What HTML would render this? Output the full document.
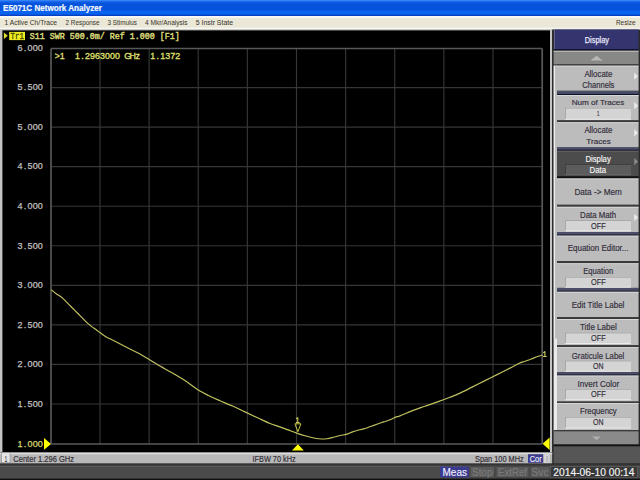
<!DOCTYPE html><html><head><meta charset="utf-8"><style>html,body{margin:0;padding:0;background:#000;overflow:hidden}svg{display:block}</style></head><body><svg width="640" height="480" viewBox="0 0 640 480"><defs><linearGradient id="tb" x1="0" y1="0" x2="0" y2="1"><stop offset="0" stop-color="#4090f8"/><stop offset="0.1" stop-color="#1a66ec"/><stop offset="0.2" stop-color="#0654dc"/><stop offset="0.6" stop-color="#0552dc"/><stop offset="0.72" stop-color="#0864f0"/><stop offset="0.88" stop-color="#0862ee"/><stop offset="0.94" stop-color="#0444c4"/><stop offset="1" stop-color="#0040c0"/></linearGradient></defs>
<rect x="0" y="0" width="640" height="16" fill="url(#tb)" />
<text x="3.00" y="11.0" font-family="Liberation Sans" font-weight="bold" font-size="8.58" fill="#f4f8ff" stroke="#f4f8ff" stroke-width="0.2" textLength="98.96" lengthAdjust="spacingAndGlyphs" style="white-space:pre">E5071C Network Analyzer</text>
<rect x="0" y="16" width="640" height="14.6" fill="#ebe8d8" />
<rect x="0" y="16" width="640" height="1.8" fill="#f8f8f8" />
<rect x="0" y="27.7" width="640" height="1.9" fill="#f8f8f4" />
<rect x="0" y="29.6" width="640" height="1.0" fill="#909090" />
<text x="4.50" y="24.8" font-family="Liberation Sans" font-weight="normal" font-size="7.85" fill="#3c3830" stroke="#3c3830" stroke-width="0.05" textLength="52.53" lengthAdjust="spacingAndGlyphs" style="white-space:pre">1 Active Ch/Trace</text>
<text x="65.50" y="24.8" font-family="Liberation Sans" font-weight="normal" font-size="7.85" fill="#3c3830" stroke="#3c3830" stroke-width="0.05" textLength="33.98" lengthAdjust="spacingAndGlyphs" style="white-space:pre">2 Response</text>
<text x="107.50" y="24.8" font-family="Liberation Sans" font-weight="normal" font-size="7.85" fill="#3c3830" stroke="#3c3830" stroke-width="0.05" textLength="29.49" lengthAdjust="spacingAndGlyphs" style="white-space:pre">3 Stimulus</text>
<text x="145.00" y="24.8" font-family="Liberation Sans" font-weight="normal" font-size="7.85" fill="#3c3830" stroke="#3c3830" stroke-width="0.05" textLength="42.51" lengthAdjust="spacingAndGlyphs" style="white-space:pre">4 Mkr/Analysis</text>
<text x="195.75" y="24.8" font-family="Liberation Sans" font-weight="normal" font-size="7.85" fill="#3c3830" stroke="#3c3830" stroke-width="0.05" textLength="37.26" lengthAdjust="spacingAndGlyphs" style="white-space:pre">5 Instr State</text>
<text x="616.00" y="24.8" font-family="Liberation Sans" font-weight="normal" font-size="7.85" fill="#3c3830" stroke="#3c3830" stroke-width="0.05" textLength="19.48" lengthAdjust="spacingAndGlyphs" style="white-space:pre">Resize</text>
<rect x="0" y="30.5" width="553" height="421.5" fill="#000" />
<rect x="0" y="29.6" width="2.4" height="422.4" fill="#c4c4c4" />
<rect x="550" y="29.6" width="2.2" height="422.4" fill="#c4c4c4" />
<rect x="552.2" y="29.5" width="1.8" height="434" fill="#303030" />
<line x1="100.02" y1="48.5" x2="100.02" y2="444" stroke="#363636" stroke-width="1.15" />
<line x1="149.14" y1="48.5" x2="149.14" y2="444" stroke="#363636" stroke-width="1.15" />
<line x1="198.26" y1="48.5" x2="198.26" y2="444" stroke="#363636" stroke-width="1.15" />
<line x1="247.38" y1="48.5" x2="247.38" y2="444" stroke="#363636" stroke-width="1.15" />
<line x1="296.50" y1="48.5" x2="296.50" y2="444" stroke="#363636" stroke-width="1.15" />
<line x1="345.62" y1="48.5" x2="345.62" y2="444" stroke="#363636" stroke-width="1.15" />
<line x1="394.74" y1="48.5" x2="394.74" y2="444" stroke="#363636" stroke-width="1.15" />
<line x1="443.86" y1="48.5" x2="443.86" y2="444" stroke="#363636" stroke-width="1.15" />
<line x1="492.98" y1="48.5" x2="492.98" y2="444" stroke="#363636" stroke-width="1.15" />
<line x1="51" y1="87.55" x2="542.2" y2="87.55" stroke="#363636" stroke-width="1.15" />
<line x1="51" y1="127.10" x2="542.2" y2="127.10" stroke="#363636" stroke-width="1.15" />
<line x1="51" y1="166.65" x2="542.2" y2="166.65" stroke="#363636" stroke-width="1.15" />
<line x1="51" y1="206.20" x2="542.2" y2="206.20" stroke="#363636" stroke-width="1.15" />
<line x1="51" y1="245.75" x2="542.2" y2="245.75" stroke="#363636" stroke-width="1.15" />
<line x1="51" y1="285.30" x2="542.2" y2="285.30" stroke="#363636" stroke-width="1.15" />
<line x1="51" y1="324.85" x2="542.2" y2="324.85" stroke="#363636" stroke-width="1.15" />
<line x1="51" y1="364.40" x2="542.2" y2="364.40" stroke="#363636" stroke-width="1.15" />
<line x1="51" y1="403.95" x2="542.2" y2="403.95" stroke="#363636" stroke-width="1.15" />
<line x1="51" y1="48.5" x2="51" y2="444" stroke="#585858" stroke-width="1.7" />
<line x1="542.2" y1="48.5" x2="542.2" y2="444" stroke="#585858" stroke-width="1.7" />
<line x1="51" y1="48.5" x2="542.2" y2="48.5" stroke="#585858" stroke-width="1.7" />
<line x1="51" y1="444" x2="542.2" y2="444" stroke="#585858" stroke-width="1.7" />
<text x="17.39 23.75 27.59 32.69 37.79" y="50.5" font-family="Liberation Sans" font-weight="normal" font-size="9.01" fill="#c0c0c0" stroke="#c0c0c0" stroke-width="0.25">6.000</text>
<text x="17.39 23.75 27.59 32.69 37.79" y="90.1" font-family="Liberation Sans" font-weight="normal" font-size="9.01" fill="#c0c0c0" stroke="#c0c0c0" stroke-width="0.25">5.500</text>
<text x="17.39 23.75 27.59 32.69 37.79" y="129.7" font-family="Liberation Sans" font-weight="normal" font-size="9.01" fill="#c0c0c0" stroke="#c0c0c0" stroke-width="0.25">5.000</text>
<text x="17.39 23.75 27.59 32.69 37.79" y="169.3" font-family="Liberation Sans" font-weight="normal" font-size="9.01" fill="#c0c0c0" stroke="#c0c0c0" stroke-width="0.25">4.500</text>
<text x="17.39 23.75 27.59 32.69 37.79" y="208.9" font-family="Liberation Sans" font-weight="normal" font-size="9.01" fill="#c0c0c0" stroke="#c0c0c0" stroke-width="0.25">4.000</text>
<text x="17.39 23.75 27.59 32.69 37.79" y="248.5" font-family="Liberation Sans" font-weight="normal" font-size="9.01" fill="#c0c0c0" stroke="#c0c0c0" stroke-width="0.25">3.500</text>
<text x="17.39 23.75 27.59 32.69 37.79" y="288.1" font-family="Liberation Sans" font-weight="normal" font-size="9.01" fill="#c0c0c0" stroke="#c0c0c0" stroke-width="0.25">3.000</text>
<text x="17.39 23.75 27.59 32.69 37.79" y="327.7" font-family="Liberation Sans" font-weight="normal" font-size="9.01" fill="#c0c0c0" stroke="#c0c0c0" stroke-width="0.25">2.500</text>
<text x="17.39 23.75 27.59 32.69 37.79" y="367.3" font-family="Liberation Sans" font-weight="normal" font-size="9.01" fill="#c0c0c0" stroke="#c0c0c0" stroke-width="0.25">2.000</text>
<text x="17.39 23.75 27.59 32.69 37.79" y="406.9" font-family="Liberation Sans" font-weight="normal" font-size="9.01" fill="#c0c0c0" stroke="#c0c0c0" stroke-width="0.25">1.500</text>
<text x="17.39 23.75 27.59 32.69 37.79" y="446.5" font-family="Liberation Sans" font-weight="normal" font-size="9.01" fill="#d8d870" stroke="#d8d870" stroke-width="0.25">1.000</text>
<path d="M3.9,32.4 L7.8,35.7 L3.9,39.0 Z" fill="#e0e030"/>
<rect x="9.2" y="31.9" width="15.8" height="8.2" fill="#f0f020" />
<text x="10.60" y="38.6" font-family="Liberation Mono" font-weight="normal" font-size="8.50" fill="#484800" stroke="#484800" stroke-width="0.3" textLength="13.20" lengthAdjust="spacingAndGlyphs" style="white-space:pre">Tr1</text>
<text x="29.70" y="38.9" font-family="Liberation Mono" font-weight="normal" font-size="9.10" fill="#d8d878" stroke="#d8d878" stroke-width="0.45" textLength="150.11" lengthAdjust="spacingAndGlyphs" style="white-space:pre">S11 SWR 500.0m/ Ref 1.000 [F1]</text>
<text x="54.71 59.85 74.91 81.17 84.95 89.97 94.99 100.01 105.03 110.05 115.07 124.13 129.40 135.40 150.21 156.47 160.25 165.27 170.29 175.31" y="58.5" font-family="Liberation Sans" font-weight="normal" font-size="8.87" fill="#e0e070" stroke="#e0e070" stroke-width="0.3">&gt;11.2963000GHz1.1372</text>
<path d="M51.25,289.75 C52.08,290.42 54.38,292.36 56.25,293.75 C58.12,295.14 60.42,296.33 62.50,298.10 C64.58,299.88 66.67,302.32 68.75,304.40 C70.83,306.48 72.92,308.52 75.00,310.60 C77.08,312.68 79.17,314.82 81.25,316.90 C83.33,318.98 85.42,321.23 87.50,323.10 C89.58,324.97 91.67,326.52 93.75,328.10 C95.83,329.68 97.92,331.13 100.00,332.60 C102.08,334.07 104.17,335.67 106.25,336.90 C108.33,338.13 109.38,338.40 112.50,340.00 C115.62,341.60 120.83,344.38 125.00,346.50 C129.17,348.62 133.33,350.50 137.50,352.75 C141.67,355.00 146.25,357.77 150.00,360.00 C153.75,362.23 156.25,363.92 160.00,366.10 C163.75,368.28 168.33,370.68 172.50,373.10 C176.67,375.52 180.83,377.88 185.00,380.60 C189.17,383.32 193.33,386.79 197.50,389.40 C201.67,392.01 206.25,394.35 210.00,396.25 C213.75,398.15 216.25,399.18 220.00,400.80 C223.75,402.43 228.33,404.15 232.50,406.00 C236.67,407.85 240.83,409.94 245.00,411.90 C249.17,413.86 253.33,415.82 257.50,417.75 C261.67,419.68 266.25,421.98 270.00,423.50 C273.75,425.02 276.60,425.70 280.00,426.90 C283.40,428.10 287.62,429.67 290.40,430.70 C293.18,431.73 294.10,432.22 296.70,433.10 C299.30,433.98 302.70,435.10 306.00,436.00 C309.30,436.90 313.88,438.00 316.50,438.50 C319.12,439.00 319.97,438.96 321.70,439.00 C323.43,439.04 325.18,438.97 326.90,438.75 C328.62,438.53 329.82,438.24 332.00,437.70 C334.18,437.16 337.62,436.05 340.00,435.50 C342.38,434.95 344.17,435.00 346.25,434.40 C348.33,433.80 350.42,432.63 352.50,431.90 C354.58,431.17 356.67,430.57 358.75,430.00 C360.83,429.43 362.92,429.12 365.00,428.50 C367.08,427.88 369.17,427.00 371.25,426.25 C373.33,425.50 375.42,424.73 377.50,424.00 C379.58,423.27 381.67,422.61 383.75,421.90 C385.83,421.19 387.92,420.58 390.00,419.75 C392.08,418.92 394.58,417.54 396.25,416.90 C397.92,416.26 397.29,416.95 400.00,415.90 C402.71,414.85 408.33,412.21 412.50,410.60 C416.67,408.99 420.83,407.70 425.00,406.25 C429.17,404.80 433.33,403.40 437.50,401.90 C441.67,400.40 446.25,398.72 450.00,397.25 C453.75,395.78 456.25,394.83 460.00,393.10 C463.75,391.38 468.33,388.98 472.50,386.90 C476.67,384.82 480.83,382.68 485.00,380.60 C489.17,378.52 493.33,376.48 497.50,374.40 C501.67,372.32 506.46,369.92 510.00,368.10 C513.54,366.28 516.25,364.64 518.75,363.50 C521.25,362.36 522.92,362.00 525.00,361.25 C527.08,360.50 529.17,359.79 531.25,359.00 C533.33,358.21 535.62,357.17 537.50,356.50 C539.38,355.83 541.67,355.25 542.50,355.00" fill="none" stroke="#c0c060" stroke-width="1.2" stroke-linejoin="round"/>
<path d="M544.9,351.3 L544.9,356.6 M543.3,352.8 L544.9,351.4 M543.0,356.5 L546.6,356.5" fill="none" stroke="#d0d060" stroke-width="1.1"/>
<path d="M297.8,417.4 L297.8,422.6 M296.2,418.9 L297.8,417.5 M296.0,422.5 L299.6,422.5" fill="none" stroke="#c8c858" stroke-width="1.1"/>
<path d="M294.9,423.8 L300.9,423.8 L297.9,431.8 Z" fill="none" stroke="#d8d840" stroke-width="0.9"/>
<path d="M292,450.6 L303.8,450.6 L297.9,444.2 Z" fill="#ffff00"/>
<path d="M44,438 L51,443.9 L44,449.8 Z" fill="#ffff00"/>
<path d="M549.6,437.5 L542.6,443.7 L549.6,450 Z" fill="#ffff00"/>
<rect x="0" y="452" width="552.2" height="11.7" fill="#b8b8b8" />
<rect x="0" y="452" width="552.2" height="0.8" fill="#707070" />
<rect x="0" y="452.8" width="552.2" height="1.5" fill="#dcdcdc" />
<rect x="1.5" y="452.6" width="8.5" height="10.2" fill="#e4e4e4" stroke="#8a8a8a" stroke-width="0.6"/>
<text x="4.80" y="462.1" font-family="Liberation Sans" font-weight="normal" font-size="8.14" fill="#302c34" stroke="#302c34" stroke-width="0.15" textLength="2.38" lengthAdjust="spacingAndGlyphs" style="white-space:pre">1</text>
<text x="13.30" y="462.1" font-family="Liberation Sans" font-weight="normal" font-size="8.14" fill="#302c34" stroke="#302c34" stroke-width="0.15" textLength="60.69" lengthAdjust="spacingAndGlyphs" style="white-space:pre">Center 1.296 GHz</text>
<text x="252.50" y="462.1" font-family="Liberation Sans" font-weight="normal" font-size="8.14" fill="#302c34" stroke="#302c34" stroke-width="0.15" textLength="43.10" lengthAdjust="spacingAndGlyphs" style="white-space:pre">IFBW 70 kHz</text>
<text x="475.00" y="462.1" font-family="Liberation Sans" font-weight="normal" font-size="8.14" fill="#302c34" stroke="#302c34" stroke-width="0.15" textLength="48.78" lengthAdjust="spacingAndGlyphs" style="white-space:pre">Span 100 MHz</text>
<rect x="528" y="454.2" width="15.2" height="8.6" fill="#3c3c8c" />
<text x="529.80" y="461.8" font-family="Liberation Sans" font-weight="normal" font-size="8.43" fill="#f0f0ff" stroke="#f0f0ff" stroke-width="0.15" textLength="11.81" lengthAdjust="spacingAndGlyphs" style="white-space:pre">Cor</text>
<rect x="543.8" y="454" width="5.8" height="9" fill="#d4d4d4" />
<text x="546.60" y="461.8" font-family="Liberation Sans" font-weight="normal" font-size="9.01" fill="#505050" stroke="#505050" stroke-width="0.15" textLength="0.99" lengthAdjust="spacingAndGlyphs" style="white-space:pre">!</text>
<rect x="0" y="463.7" width="640" height="16.3" fill="#4a4a4a" />
<rect x="0" y="463.7" width="640" height="2.1" fill="#343434" />
<rect x="0" y="465.8" width="640" height="1.2" fill="#5a5a5a" />
<rect x="0" y="478.6" width="640" height="1.4" fill="#101010" />
<rect x="440" y="466.5" width="29" height="11" fill="#3a3a8e" />
<text x="442.50" y="475.8" font-family="Liberation Sans" font-weight="normal" font-size="10.47" fill="#f0f0ff" stroke="#f0f0ff" stroke-width="0.15" textLength="24.45" lengthAdjust="spacingAndGlyphs" style="white-space:pre">Meas</text>
<rect x="470" y="466.5" width="24.5" height="11" fill="#5c5c5c" stroke="#444" stroke-width="0.8"/>
<text x="472.00" y="475.8" font-family="Liberation Sans" font-weight="normal" font-size="10.47" fill="#7a7a7a" stroke="#7a7a7a" stroke-width="0.15" textLength="20.47" lengthAdjust="spacingAndGlyphs" style="white-space:pre">Stop</text>
<rect x="496" y="466.5" width="33" height="11" fill="#5a5a5a" stroke="#444" stroke-width="0.8"/>
<text x="498.00" y="475.8" font-family="Liberation Sans" font-weight="normal" font-size="10.47" fill="#7a7a7a" stroke="#7a7a7a" stroke-width="0.15" textLength="29.01" lengthAdjust="spacingAndGlyphs" style="white-space:pre">ExtRef</text>
<rect x="530" y="466.5" width="20" height="11" fill="#5a5a5a" stroke="#444" stroke-width="0.8"/>
<text x="531.50" y="475.8" font-family="Liberation Sans" font-weight="normal" font-size="10.47" fill="#7a7a7a" stroke="#7a7a7a" stroke-width="0.15" textLength="16.97" lengthAdjust="spacingAndGlyphs" style="white-space:pre">Svc</text>
<rect x="550.6" y="466.5" width="87" height="11" fill="#383838" stroke="#5e5e5e" stroke-width="0.8"/>
<text x="553.30" y="475.6" font-family="Liberation Sans" font-weight="normal" font-size="10.17" fill="#f4f4f4" stroke="#f4f4f4" stroke-width="0.15" textLength="81.25" lengthAdjust="spacingAndGlyphs" style="white-space:pre">2014-06-10 00:14</text>
<rect x="553.6" y="29.3" width="86.4" height="434.1" fill="#2a2a2a" />
<rect x="553.6" y="28.6" width="86.4" height="0.9" fill="#e8e8e8" />
<rect x="554.2" y="29.5" width="84.4" height="19.6" fill="#34346e" />
<rect x="554.2" y="29.5" width="0.8" height="19.6" fill="#7070a0" />
<text x="584.80" y="42.6" font-family="Liberation Sans" font-weight="normal" font-size="8.43" fill="#e8e8fa" stroke="#e8e8fa" stroke-width="0.25" textLength="24.19" lengthAdjust="spacingAndGlyphs" style="white-space:pre">Display</text>
<rect x="553.6" y="50.6" width="85" height="13.8" fill="#888886" />
<rect x="553.6" y="50.8" width="85" height="1.2" fill="#b4b4b4" />
<rect x="553.6" y="49.0" width="85" height="1.2" fill="#141430" />
<path d="M590.5,60.4 L596.6,55.8 L602.7,60.4 Z" fill="#b8b8b8"/>
<rect x="553.6" y="65.6" width="3.4" height="365.6" fill="#eaeaea" />
<rect x="554.6" y="65.6" width="2.4" height="273" fill="#bdbdbd" />
<rect x="553.9" y="65.6" width="0.8" height="273" fill="#f8f8f8" />
<rect x="557" y="64.4" width="81.6" height="1.3" fill="#3a3a3a" />
<rect x="557" y="65.7" width="81.6" height="25.099999999999994" fill="#bcbcbc" />
<rect x="557" y="65.7" width="81.6" height="0.8" fill="#dedede" />
<text x="584.40" y="76.6" font-family="Liberation Sans" font-weight="normal" font-size="8.14" fill="#34303c" stroke="#34303c" stroke-width="0.18" textLength="27.88" lengthAdjust="spacingAndGlyphs" style="white-space:pre">Allocate</text>
<text x="582.30" y="87.8" font-family="Liberation Sans" font-weight="normal" font-size="8.14" fill="#34303c" stroke="#34303c" stroke-width="0.18" textLength="32.14" lengthAdjust="spacingAndGlyphs" style="white-space:pre">Channels</text>
<path d="M634.2,72.7 L638,76.2 L634.2,79.8 Z" fill="#ececec"/>
<rect x="557" y="90.8" width="81.6" height="4.200000000000003" fill="#4a4e66" />
<rect x="557" y="93.9" width="81.6" height="1.1" fill="#12122a" />
<rect x="557" y="95.0" width="81.6" height="25.400000000000006" fill="#bcbcbc" />
<rect x="557" y="95.0" width="81.6" height="0.8" fill="#dedede" />
<text x="571.70" y="104.9" font-family="Liberation Sans" font-weight="normal" font-size="7.99" fill="#34303c" stroke="#34303c" stroke-width="0.18" textLength="52.71" lengthAdjust="spacingAndGlyphs" style="white-space:pre">Num of Traces</text>
<rect x="565" y="107.6" width="66" height="12.0" fill="#d4d4d4" />
<rect x="565" y="107.6" width="66" height="1" fill="#a8a8a8" />
<rect x="565" y="107.6" width="1" height="12.0" fill="#a8a8a8" />
<rect x="565" y="118.8" width="66" height="0.8" fill="#f0f0f0" />
<text x="597.00" y="116.2" font-family="Liberation Sans" font-weight="normal" font-size="7.85" fill="#34303c" stroke="#34303c" stroke-width="0.18" textLength="2.38" lengthAdjust="spacingAndGlyphs" style="white-space:pre">1</text>
<path d="M634.2,102.1 L638,105.7 L634.2,109.3 Z" fill="#ececec"/>
<rect x="557" y="120.4" width="81.6" height="1.8999999999999915" fill="#3a3a3a" />
<rect x="557" y="122.3" width="81.6" height="25.10000000000001" fill="#bcbcbc" />
<rect x="557" y="122.3" width="81.6" height="0.8" fill="#dedede" />
<text x="584.40" y="133.0" font-family="Liberation Sans" font-weight="normal" font-size="8.28" fill="#34303c" stroke="#34303c" stroke-width="0.18" textLength="27.88" lengthAdjust="spacingAndGlyphs" style="white-space:pre">Allocate</text>
<text x="586.30" y="144.0" font-family="Liberation Sans" font-weight="normal" font-size="7.99" fill="#34303c" stroke="#34303c" stroke-width="0.18" textLength="24.49" lengthAdjust="spacingAndGlyphs" style="white-space:pre">Traces</text>
<path d="M634.2,129.2 L638,132.8 L634.2,136.4 Z" fill="#ececec"/>
<rect x="557" y="147.4" width="81.6" height="3.4000000000000057" fill="#4a4e66" />
<rect x="557" y="149.70000000000002" width="81.6" height="1.1" fill="#12122a" />
<rect x="557" y="150.8" width="81.6" height="25.599999999999994" fill="#4c4c4c" />
<rect x="557" y="150.8" width="81.6" height="0.8" fill="#6a6a6a" />
<text x="585.40" y="162.2" font-family="Liberation Sans" font-weight="normal" font-size="9.30" fill="#f4f4f4" stroke="#f4f4f4" stroke-width="0.18" textLength="25.39" lengthAdjust="spacingAndGlyphs" style="white-space:pre">Display</text>
<rect x="565" y="164.0" width="66" height="11.199999999999989" fill="#5c5c5c" />
<rect x="565" y="164.0" width="66" height="1" fill="#404040" />
<rect x="565" y="164.0" width="1" height="11.199999999999989" fill="#404040" />
<rect x="565" y="174.39999999999998" width="66" height="0.8" fill="#6a6a6a" />
<text x="589.60" y="172.8" font-family="Liberation Sans" font-weight="normal" font-size="8.43" fill="#f4f4f4" stroke="#f4f4f4" stroke-width="0.18" textLength="16.54" lengthAdjust="spacingAndGlyphs" style="white-space:pre">Data</text>
<path d="M634.2,158.0 L638,161.6 L634.2,165.2 Z" fill="#8a8a8a"/>
<rect x="557" y="176.4" width="81.6" height="2.0999999999999943" fill="#101010" />
<rect x="557" y="178.5" width="81.6" height="26.30000000000001" fill="#bcbcbc" />
<rect x="557" y="178.5" width="81.6" height="0.8" fill="#dedede" />
<text x="574.40" y="194.8" font-family="Liberation Sans" font-weight="normal" font-size="9.01" fill="#34303c" stroke="#34303c" stroke-width="0.18" textLength="47.47" lengthAdjust="spacingAndGlyphs" style="white-space:pre">Data -&gt; Mem</text>
<rect x="557" y="204.8" width="81.6" height="2.0" fill="#3a3a3a" />
<rect x="557" y="206.8" width="81.6" height="25.19999999999999" fill="#bcbcbc" />
<rect x="557" y="206.8" width="81.6" height="0.8" fill="#dedede" />
<text x="580.00" y="217.5" font-family="Liberation Sans" font-weight="normal" font-size="8.14" fill="#34303c" stroke="#34303c" stroke-width="0.18" textLength="36.02" lengthAdjust="spacingAndGlyphs" style="white-space:pre">Data Math</text>
<rect x="565" y="220.0" width="66" height="11.300000000000011" fill="#d4d4d4" />
<rect x="565" y="220.0" width="66" height="1" fill="#a8a8a8" />
<rect x="565" y="220.0" width="1" height="11.300000000000011" fill="#a8a8a8" />
<rect x="565" y="230.5" width="66" height="0.8" fill="#f0f0f0" />
<text x="591.00" y="228.6" font-family="Liberation Sans" font-weight="normal" font-size="8.43" fill="#34303c" stroke="#34303c" stroke-width="0.18" textLength="14.60" lengthAdjust="spacingAndGlyphs" style="white-space:pre">OFF</text>
<path d="M634.2,213.8 L638,217.4 L634.2,221.0 Z" fill="#ececec"/>
<rect x="557" y="232.0" width="81.6" height="3.6999999999999886" fill="#4a4e66" />
<rect x="557" y="234.6" width="81.6" height="1.1" fill="#12122a" />
<rect x="557" y="235.7" width="81.6" height="25.400000000000034" fill="#bcbcbc" />
<rect x="557" y="235.7" width="81.6" height="0.8" fill="#dedede" />
<text x="567.70" y="251.0" font-family="Liberation Sans" font-weight="normal" font-size="8.72" fill="#34303c" stroke="#34303c" stroke-width="0.18" textLength="60.77" lengthAdjust="spacingAndGlyphs" style="white-space:pre">Equation Editor...</text>
<rect x="557" y="261.1" width="81.6" height="2.1999999999999886" fill="#3a3a3a" />
<rect x="557" y="263.3" width="81.6" height="24.599999999999966" fill="#bcbcbc" />
<rect x="557" y="263.3" width="81.6" height="0.8" fill="#dedede" />
<text x="583.30" y="274.0" font-family="Liberation Sans" font-weight="normal" font-size="8.28" fill="#34303c" stroke="#34303c" stroke-width="0.18" textLength="29.98" lengthAdjust="spacingAndGlyphs" style="white-space:pre">Equation</text>
<rect x="565" y="276.7" width="66" height="11.0" fill="#d4d4d4" />
<rect x="565" y="276.7" width="66" height="1" fill="#a8a8a8" />
<rect x="565" y="276.7" width="1" height="11.0" fill="#a8a8a8" />
<rect x="565" y="286.9" width="66" height="0.8" fill="#f0f0f0" />
<text x="591.00" y="285.2" font-family="Liberation Sans" font-weight="normal" font-size="8.43" fill="#34303c" stroke="#34303c" stroke-width="0.18" textLength="14.60" lengthAdjust="spacingAndGlyphs" style="white-space:pre">OFF</text>
<rect x="557" y="287.9" width="81.6" height="3.900000000000034" fill="#4a4e66" />
<rect x="557" y="290.7" width="81.6" height="1.1" fill="#12122a" />
<rect x="557" y="291.8" width="81.6" height="25.399999999999977" fill="#bcbcbc" />
<rect x="557" y="291.8" width="81.6" height="0.8" fill="#dedede" />
<text x="571.70" y="307.8" font-family="Liberation Sans" font-weight="normal" font-size="9.16" fill="#34303c" stroke="#34303c" stroke-width="0.18" textLength="52.69" lengthAdjust="spacingAndGlyphs" style="white-space:pre">Edit Title Label</text>
<rect x="557" y="317.2" width="81.6" height="1.8000000000000114" fill="#3a3a3a" />
<rect x="557" y="319.0" width="81.6" height="26.30000000000001" fill="#bcbcbc" />
<rect x="557" y="319.0" width="81.6" height="0.8" fill="#dedede" />
<text x="580.00" y="330.0" font-family="Liberation Sans" font-weight="normal" font-size="8.87" fill="#34303c" stroke="#34303c" stroke-width="0.18" textLength="36.67" lengthAdjust="spacingAndGlyphs" style="white-space:pre">Title Label</text>
<rect x="565" y="332.4" width="66" height="11.600000000000023" fill="#d4d4d4" />
<rect x="565" y="332.4" width="66" height="1" fill="#a8a8a8" />
<rect x="565" y="332.4" width="1" height="11.600000000000023" fill="#a8a8a8" />
<rect x="565" y="343.2" width="66" height="0.8" fill="#f0f0f0" />
<text x="591.00" y="341.4" font-family="Liberation Sans" font-weight="normal" font-size="8.72" fill="#34303c" stroke="#34303c" stroke-width="0.18" textLength="14.60" lengthAdjust="spacingAndGlyphs" style="white-space:pre">OFF</text>
<rect x="557" y="345.3" width="81.6" height="1.8999999999999773" fill="#3a3a3a" />
<rect x="557" y="347.2" width="81.6" height="25.0" fill="#bcbcbc" />
<rect x="557" y="347.2" width="81.6" height="0.8" fill="#dedede" />
<text x="571.70" y="358.6" font-family="Liberation Sans" font-weight="normal" font-size="9.30" fill="#34303c" stroke="#34303c" stroke-width="0.18" textLength="52.67" lengthAdjust="spacingAndGlyphs" style="white-space:pre">Graticule Label</text>
<rect x="565" y="360.4" width="66" height="11.200000000000045" fill="#d4d4d4" />
<rect x="565" y="360.4" width="66" height="1" fill="#a8a8a8" />
<rect x="565" y="360.4" width="1" height="11.200000000000045" fill="#a8a8a8" />
<rect x="565" y="370.8" width="66" height="0.8" fill="#f0f0f0" />
<text x="593.00" y="369.3" font-family="Liberation Sans" font-weight="normal" font-size="8.72" fill="#34303c" stroke="#34303c" stroke-width="0.18" textLength="10.50" lengthAdjust="spacingAndGlyphs" style="white-space:pre">ON</text>
<rect x="557" y="372.2" width="81.6" height="3.400000000000034" fill="#4a4e66" />
<rect x="557" y="374.5" width="81.6" height="1.1" fill="#12122a" />
<rect x="557" y="375.6" width="81.6" height="26.0" fill="#bcbcbc" />
<rect x="557" y="375.6" width="81.6" height="0.8" fill="#dedede" />
<text x="577.50" y="386.6" font-family="Liberation Sans" font-weight="normal" font-size="9.16" fill="#34303c" stroke="#34303c" stroke-width="0.18" textLength="41.68" lengthAdjust="spacingAndGlyphs" style="white-space:pre">Invert Color</text>
<rect x="565" y="388.8" width="66" height="11.399999999999977" fill="#d4d4d4" />
<rect x="565" y="388.8" width="66" height="1" fill="#a8a8a8" />
<rect x="565" y="388.8" width="1" height="11.399999999999977" fill="#a8a8a8" />
<rect x="565" y="399.4" width="66" height="0.8" fill="#f0f0f0" />
<text x="591.00" y="397.4" font-family="Liberation Sans" font-weight="normal" font-size="8.43" fill="#34303c" stroke="#34303c" stroke-width="0.18" textLength="14.60" lengthAdjust="spacingAndGlyphs" style="white-space:pre">OFF</text>
<rect x="557" y="401.6" width="81.6" height="1.3999999999999773" fill="#3a3a3a" />
<rect x="557" y="403.0" width="81.6" height="27.0" fill="#bcbcbc" />
<rect x="557" y="403.0" width="81.6" height="0.8" fill="#dedede" />
<text x="580.00" y="414.4" font-family="Liberation Sans" font-weight="normal" font-size="8.28" fill="#34303c" stroke="#34303c" stroke-width="0.18" textLength="36.73" lengthAdjust="spacingAndGlyphs" style="white-space:pre">Frequency</text>
<rect x="565" y="416.8" width="66" height="11.599999999999966" fill="#d4d4d4" />
<rect x="565" y="416.8" width="66" height="1" fill="#a8a8a8" />
<rect x="565" y="416.8" width="1" height="11.599999999999966" fill="#a8a8a8" />
<rect x="565" y="427.59999999999997" width="66" height="0.8" fill="#f0f0f0" />
<text x="593.00" y="425.4" font-family="Liberation Sans" font-weight="normal" font-size="8.43" fill="#34303c" stroke="#34303c" stroke-width="0.18" textLength="10.50" lengthAdjust="spacingAndGlyphs" style="white-space:pre">ON</text>
<rect x="553.6" y="430.0" width="85" height="1.3" fill="#3a3a3a" />
<rect x="553.6" y="431.3" width="85" height="13.2" fill="#8a8a8a" />
<path d="M592.2,436.6 L600.8,436.6 L596.5,440.2 Z" fill="#b0b0b0"/>
<rect x="553.6" y="444.5" width="86.4" height="1.9" fill="#141414" />
<rect x="553.6" y="446.4" width="86.4" height="17" fill="#565656" /></svg></body></html>
